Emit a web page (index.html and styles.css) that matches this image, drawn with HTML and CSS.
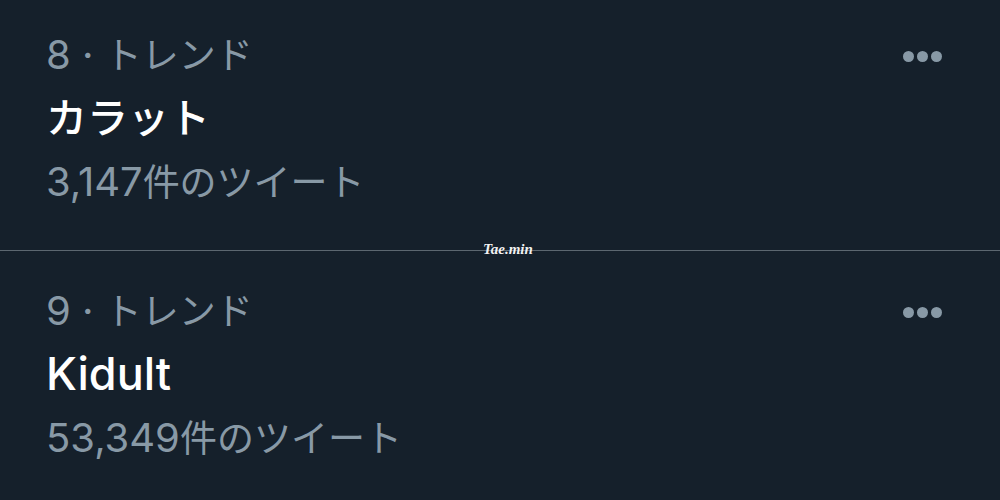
FILE: index.html
```html
<!DOCTYPE html>
<html lang="ja">
<head>
  <meta charset="UTF-8" />
  <title>トレンド</title>
  <link rel="stylesheet" href="styles.css">
</head>
<body>

<div class="trend-list">
  <!-- 8位 -->
  <div class="trend">
    <div class="trend-text">
      <div class="trend-meta"><span class="num">8 · </span>トレンド</div>
      <div class="trend-name">カラット</div>
      <div class="trend-count"><span class="num">3,147</span>件のツイート</div>
    </div>
    <div class="more"><span></span><span></span><span></span></div>
  </div>

  <div class="divider">
    <span class="watermark">Tae.min</span>
  </div>

  <!-- 9位 -->
  <div class="trend second">
    <div class="trend-text">
      <div class="trend-meta"><span class="num">9 · </span>トレンド</div>
      <div class="trend-name latin">Kidult</div>
      <div class="trend-count"><span class="num">53,349</span>件のツイート</div>
    </div>
    <div class="more"><span></span><span></span><span></span></div>
  </div>
</div>

</body>
</html>
```

FILE: styles.css
```css
* {
  box-sizing: border-box;
  margin: 0;
  padding: 0;
}

body {
  width: 1000px;
  height: 500px;
  overflow: hidden;
  background-color: #15202b;
  font-family: "Inter", "Noto Sans CJK JP", sans-serif;
}

.trend-list {
  display: flex;
  flex-direction: column;
}

.trend {
  height: 250px;
  padding: 28px 58px 0 46px;
  display: flex;
  justify-content: space-between;
  align-items: flex-start;
}

.trend.second {
  height: 249px;
  padding-top: 33px;
}

.trend-meta,
.trend-count {
  color: #8899a6;
  font-size: 37px;
  line-height: 54px;
}

/* цифры в Hiragino крупнее, чем у Noto */
.num {
  font-size: 40px;
}

.trend-name {
  color: #ffffff;
  font-size: 41px;
  font-weight: 500;
  line-height: 70px;
}

.trend-name.latin {
  font-size: 45px;
}

.trend-count {
  line-height: 58px;
}

.more {
  display: flex;
  gap: 3px;
  margin-top: 23px;
}

.more span {
  width: 11px;
  height: 11px;
  border-radius: 50%;
  background-color: #8899a6;
}

.divider {
  height: 1px;
  background-color: #5c6770;
  position: relative;
}

.watermark {
  position: absolute;
  left: 483px;
  top: -9px;
  font-family: "Liberation Serif", serif;
  font-style: italic;
  font-weight: bold;
  font-size: 15px;
  color: #f2f2f2;
}
```
